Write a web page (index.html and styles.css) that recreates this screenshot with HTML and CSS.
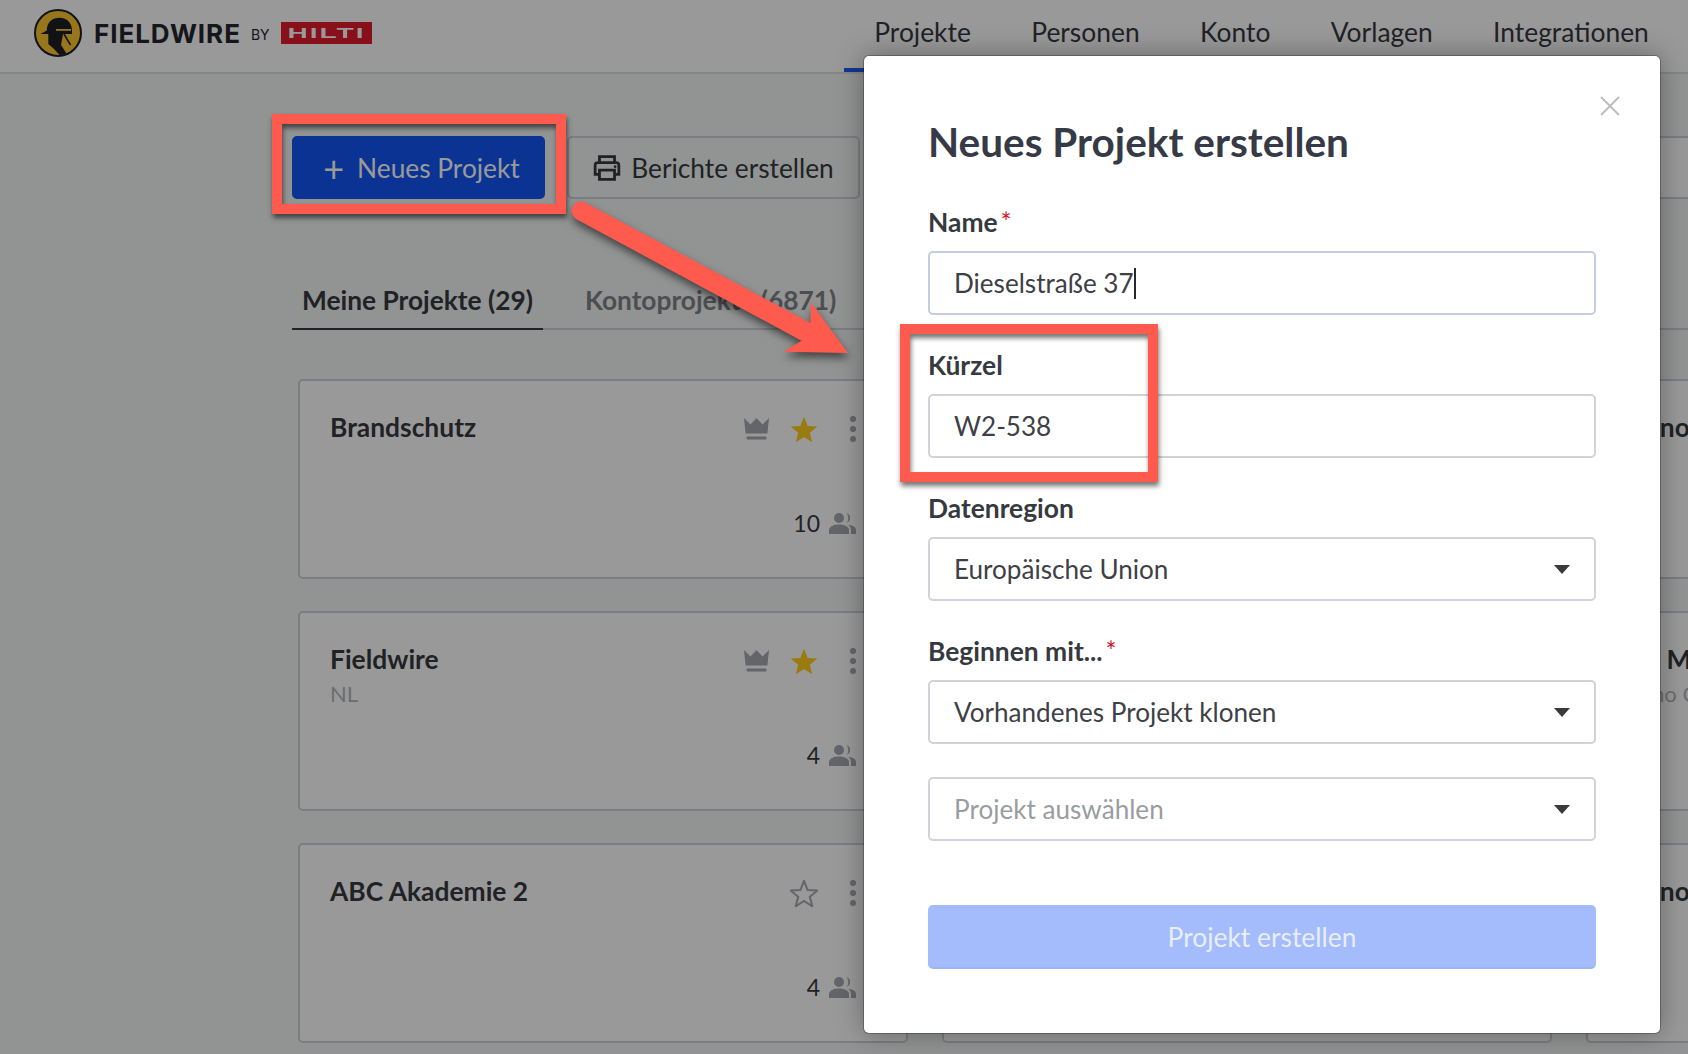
FILE: index.html
```html
<!DOCTYPE html>
<html lang="de">
<head>
<meta charset="utf-8">
<title>Fieldwire</title>
<link rel="stylesheet" href="styles.css">
</head>
<body>
<svg class="defs" width="0" height="0" aria-hidden="true">
  <defs>
    <symbol id="crown" viewBox="0 0 25 22"><path d="M0 0 L6.500 6.500 L12.500 0 L18.500 6.500 L25 0 L23.400 15.500 H1.600 Z"/><rect x="2.500" y="18.500" width="20" height="3" rx="1.200"/></symbol>
    <symbol id="star" viewBox="0 0 28 27"><path d="M14 0.800 L17.600 10 L27.400 10.500 L19.800 16.800 L22.300 26.300 L14 21 L5.700 26.300 L8.200 16.800 L0.600 10.500 L10.400 10 Z"/></symbol>
    <symbol id="dots" viewBox="0 0 6 26"><circle cx="3" cy="3" r="3"/><circle cx="3" cy="13" r="3"/><circle cx="3" cy="23" r="3"/></symbol>
    <symbol id="people" viewBox="0 0 27 21"><circle cx="10" cy="5" r="5"/><path d="M17.500 0.200 A5 5 0 0 1 17.500 9.800 A7 7 0 0 0 17.500 0.200 Z"/><path d="M0 21 V17 C0 13.500 5 11.500 10 11.500 C15 11.500 20 13.500 20 17 V21 Z"/><path d="M19 11.800 C23.500 12.300 27 14 27 17 V21 H22 V17 C22 15 21 13 19 11.800 Z"/></symbol>
    <symbol id="caret" viewBox="0 0 16 9"><path d="M0 0 H16 L8 9 Z"/></symbol>
  </defs>
</svg>

<div class="page">
  <header class="topbar">
    <div class="brand">
      <svg class="logo" viewBox="0 0 48 48" aria-hidden="true">
        <circle cx="24" cy="24" r="23" fill="#fdc52e" stroke="#1c1f24" stroke-width="2"/>
        <path d="M14.300 24 L14.300 35 L20 40 L26 46.500 L32.500 44.500 L27 36 L29 25 Z" fill="#1c1f24"/>
        <path d="M6.500 25 L12.800 21.500 C12.800 13 18.500 8.800 25.500 8.800 C33 8.800 38 14 38 21.500 L38 25 Z" fill="#1c1f24"/>
        <rect x="22" y="20" width="15" height="1.800" fill="#fdc52e"/>
        <path d="M30 25 L36.500 36" fill="none" stroke="#1c1f24" stroke-width="1.500"/>
      </svg>
      <span class="wordmark">FIELDWIRE</span>
      <span class="by">BY</span>
      <span class="hilti"><span class="hilti-text">HILTI</span></span>
    </div>
    <nav class="nav">
      <a class="nav-item is-active">Projekte</a>
      <a class="nav-item">Personen</a>
      <a class="nav-item">Konto</a>
      <a class="nav-item">Vorlagen</a>
      <a class="nav-item">Integrationen</a>
    </nav>
  </header>

  <main class="content">
    <div class="toolbar">
      <button class="btn btn-primary"><span class="plus">+</span>Neues Projekt</button>
      <button class="btn btn-outline">
        <svg class="printer" viewBox="0 0 26 24" aria-hidden="true"><path d="M6 7 V1.500 H20 V7 M6 18 H2 V9.500 Q2 7 4.500 7 H21.500 Q24 7 24 9.500 V18 H20 M6 14 H20 V22.500 H6 Z" fill="none" stroke="currentColor" stroke-width="2.600"/><circle cx="20.500" cy="10.800" r="1.300" fill="currentColor"/></svg>
        Berichte erstellen
      </button>
      <div class="search"></div>
    </div>

    <div class="tabs">
      <a class="tab is-active">Meine Projekte (29)</a>
      <a class="tab">Kontoprojekte (6871)</a>
    </div>

    <div class="cards">
      <article class="card">
        <div class="card-head">
          <div><h3 class="card-title">Brandschutz</h3></div>
          <div class="card-actions">
            <svg class="ico-crown"><use href="#crown"/></svg>
            <svg class="ico-star"><use href="#star"/></svg>
            <svg class="ico-dots"><use href="#dots"/></svg>
          </div>
        </div>
        <div class="card-meta">10<svg class="ico-people"><use href="#people"/></svg></div>
      </article>
      <article class="card"></article>
      <article class="card"><div class="card-head"><div><h3 class="card-title">Bruno</h3></div></div></article>

      <article class="card">
        <div class="card-head">
          <div><h3 class="card-title">Fieldwire</h3><p class="card-sub">NL</p></div>
          <div class="card-actions">
            <svg class="ico-crown"><use href="#crown"/></svg>
            <svg class="ico-star"><use href="#star"/></svg>
            <svg class="ico-dots"><use href="#dots"/></svg>
          </div>
        </div>
        <div class="card-meta">4<svg class="ico-people"><use href="#people"/></svg></div>
      </article>
      <article class="card"></article>
      <article class="card"><div class="card-head"><div><h3 class="card-title">Bas Muster</h3><p class="card-sub">Demo Co</p></div></div></article>

      <article class="card">
        <div class="card-head">
          <div><h3 class="card-title">ABC Akademie 2</h3></div>
          <div class="card-actions">
            <svg class="ico-star-empty"><use href="#star"/></svg>
            <svg class="ico-dots"><use href="#dots"/></svg>
          </div>
        </div>
        <div class="card-meta">4<svg class="ico-people"><use href="#people"/></svg></div>
      </article>
      <article class="card"></article>
      <article class="card"><div class="card-head"><div><h3 class="card-title">Bruno</h3></div></div></article>
    </div>
  </main>
</div>

<div class="backdrop"></div>

<section class="modal">
  <svg class="close" viewBox="0 0 20 20" aria-hidden="true"><path d="M1 1 L19 19 M19 1 L1 19" fill="none" stroke="currentColor" stroke-width="1.800"/></svg>
  <h2 class="modal-title">Neues Projekt erstellen</h2>
  <div class="field">
    <label class="label">Name<span class="req">*</span></label>
    <div class="control is-focused">Dieselstraße 37<span class="text-caret"></span></div>
  </div>
  <div class="field">
    <label class="label">Kürzel</label>
    <div class="control">W2-538</div>
  </div>
  <div class="field">
    <label class="label">Datenregion</label>
    <div class="control control-select">Europäische Union<svg class="ico-caret"><use href="#caret"/></svg></div>
  </div>
  <div class="field">
    <label class="label">Beginnen mit...<span class="req">*</span></label>
    <div class="control control-select">Vorhandenes Projekt klonen<svg class="ico-caret"><use href="#caret"/></svg></div>
  </div>
  <div class="field field-plain">
    <div class="control control-select is-placeholder">Projekt auswählen<svg class="ico-caret"><use href="#caret"/></svg></div>
  </div>
  <button class="submit">Projekt erstellen</button>
</section>

<div class="callout callout-button"></div>
<div class="callout callout-field"></div>
<svg class="arrow" viewBox="0 0 300 170" aria-hidden="true">
  <path d="M16 3 L240.600 123 L240.600 102 L278 153 L213.700 151.700 L231.500 140.700 L6 19 A9.300 9.300 0 0 1 16 3 Z"/>
</svg>
</body>
</html>
```

FILE: styles.css
```css
* { box-sizing: border-box; }

html, body {
  margin: 0;
  height: 100%;
}

body {
  position: relative;
  width: 1688px;
  height: 1054px;
  overflow: hidden;
  background: #f3f6f5;
  color: #363a40;
  font-family: Lato, "Liberation Sans", sans-serif;
}

.defs { position: absolute; }

/* Page behind the dialog */
.page { width: 1688px; }

.topbar {
  display: flex;
  justify-content: space-between;
  height: 74px;
  padding: 0 9px 0 34px;
  background: #fff;
  border-bottom: 2px solid #dcdfe3;
}

.brand {
  display: flex;
  align-items: center;
  height: 66px;
}

.logo { width: 48px; height: 48px; margin-right: 12px; }

.wordmark {
  font-family: Inter, "Liberation Sans", sans-serif;
  font-size: 26px;
  font-weight: 700;
  letter-spacing: 0.950px;
  color: #23262c;
}

.by {
  margin: 2px 11px 0 10px;
  font-family: Inter, "Liberation Sans", sans-serif;
  font-size: 14px;
  color: #23262c;
}

.hilti {
  display: flex;
  align-items: center;
  justify-content: center;
  width: 91px;
  height: 22px;
  background: #e21c2d;
}

.hilti-text {
  display: inline-block;
  font-family: "Liberation Sans", sans-serif;
  font-size: 14px;
  line-height: 14px;
  font-weight: 700;
  letter-spacing: 1px;
  color: #fff;
  transform: scaleX(2);
}

.nav { display: flex; }

.nav-item {
  display: flex;
  align-items: center;
  height: 68px;
  padding: 0 30.200px;
  font-size: 26.400px;
  color: #363a40;
  border-bottom: 4px solid transparent;
}

.nav-item.is-active {
  height: 72px;
  padding-bottom: 4px;
  border-bottom-color: #1a5cf5;
}

.content { padding: 62px 0 0 292px; }

.toolbar {
  display: flex;
  gap: 22px;
  width: 1500px;
}

.btn {
  display: flex;
  align-items: center;
  height: 63px;
  font: inherit;
  font-size: 26.300px;
  border-radius: 5px;
}

.btn-primary {
  width: 253px;
  justify-content: center;
  padding-left: 12px;
  color: #fff;
  background: #1155f6;
  border: 2px solid #1155f6;
}

.plus {
  margin-right: 13px;
  font-size: 36px;
  font-weight: 400;
  line-height: 30px;
}

.btn-outline {
  width: 293px;
  justify-content: center;
  gap: 10px;
  color: #363a40;
  background: #f3f6f5;
  border: 2px solid #ced1d6;
}

.printer { width: 28px; height: 26px; }

.search {
  flex: 1;
  height: 63px;
  background: #fff;
  border: 2px solid #ced1d6;
  border-radius: 5px;
}

.tabs {
  display: flex;
  gap: 32px;
  width: 1500px;
  height: 66px;
  margin-top: 65px;
  margin-bottom: 49px;
  border-bottom: 2px solid #ced1d6;
}

.tab {
  height: 66px;
  padding: 20px 10px 0;
  font-size: 26.300px;
  font-weight: 700;
  color: #7f8288;
}

.tab.is-active {
  color: #363a40;
  border-bottom: 2px solid #363a40;
}

.cards {
  display: grid;
  grid-template-columns: repeat(3, 610px);
  grid-auto-rows: 200px;
  column-gap: 34px;
  row-gap: 32px;
  margin-left: 6px;
}

.card {
  display: flex;
  flex-direction: column;
  justify-content: space-between;
  padding: 30px 50px 40px 30px;
  background: #fff;
  border: 2px solid #ced1d6;
  border-radius: 5px;
}

.card-head {
  display: flex;
  justify-content: space-between;
}

.card-title {
  margin: 0;
  font-size: 26.400px;
  line-height: 32px;
  font-weight: 700;
  color: #363a40;
}

.card-sub {
  margin: 4px 0 0;
  font-size: 22px;
  line-height: 30px;
  color: #b4b6ba;
}

.card-actions {
  display: flex;
  align-items: center;
  height: 36px;
}

.ico-crown { width: 25px; height: 22px; margin-right: 21px; fill: #a5a8ae; }
.ico-star { width: 28px; height: 27px; margin-right: 32px; fill: #ffcd1a; }
.ico-star-empty { width: 28px; height: 27px; margin-right: 32px; fill: none; stroke: #a5a8ae; stroke-width: 2; }
.ico-dots { width: 6px; height: 26px; fill: #a5a8ae; }

.card-meta {
  display: flex;
  align-items: center;
  justify-content: flex-end;
  gap: 9px;
  font-size: 23px;
  line-height: 28px;
}

.ico-people { width: 27px; height: 21px; fill: #a5a8ae; }

/* Dim layer */
.backdrop {
  position: absolute;
  inset: 0;
  background: rgba(0, 0, 0, 0.4);
}

/* Dialog */
.modal {
  position: absolute;
  left: 864px;
  top: 56px;
  width: 796px;
  height: 977px;
  padding: 0 64px;
  background: #fff;
  border-radius: 5px;
  box-shadow: 0 0 0 1px rgba(0, 0, 0, 0.25), 0 0 28px rgba(0, 0, 0, 0.35);
}

.close {
  position: absolute;
  top: 40px;
  right: 40px;
  width: 20px;
  height: 20px;
  color: #b9bbbe;
}

.modal-title {
  margin: 60px 0 39px;
  font-size: 40.500px;
  line-height: 52px;
  font-weight: 700;
  color: #363a46;
}

.field { margin-bottom: 35px; }
.field-plain { margin-top: -2px; margin-bottom: 64px; }

.label {
  display: block;
  margin-bottom: 14px;
  font-size: 26.400px;
  line-height: 30px;
  font-weight: 700;
  color: #363a40;
}

.req {
  margin-left: 3px;
  font-size: 26px;
  line-height: 0;
  font-weight: 400;
  color: #d8152a;
}

.control {
  display: flex;
  align-items: center;
  height: 64px;
  padding: 0 24px;
  font-size: 26.100px;
  color: #3d4046;
  background: #fff;
  border: 2px solid #d2d2d8;
  border-radius: 5px;
}

.is-focused { border-color: #c4cde0; }
.control-select { justify-content: space-between; }
.is-placeholder { color: #9a9ca1; }

.text-caret {
  width: 2px;
  height: 31px;
  background: #26282c;
}

.ico-caret { width: 16px; height: 9px; fill: #3a3a3d; }

.submit {
  display: block;
  width: 100%;
  height: 64px;
  padding-top: 3px;
  font: inherit;
  font-size: 26.400px;
  color: #e8eeff;
  background: #a4bcfb;
  border: 0;
  border-bottom: 2px solid #9db5f3;
  border-radius: 5px;
}

/* Screenshot annotations */
.callout {
  position: absolute;
  border: 10px solid #ff5a4e;
  box-shadow: 1px 4px 5px rgba(0, 0, 0, 0.55), inset 1px 4px 5px rgba(0, 0, 0, 0.55);
}

.callout-button { left: 272px; top: 114px; width: 294px; height: 100px; }
.callout-field { left: 900px; top: 324px; width: 258px; height: 158px; }

.arrow {
  position: absolute;
  left: 570px;
  top: 200px;
  width: 300px;
  height: 170px;
  fill: #ff5a4e;
  filter: drop-shadow(1px 5px 4px rgba(0, 0, 0, 0.55));
}
```
